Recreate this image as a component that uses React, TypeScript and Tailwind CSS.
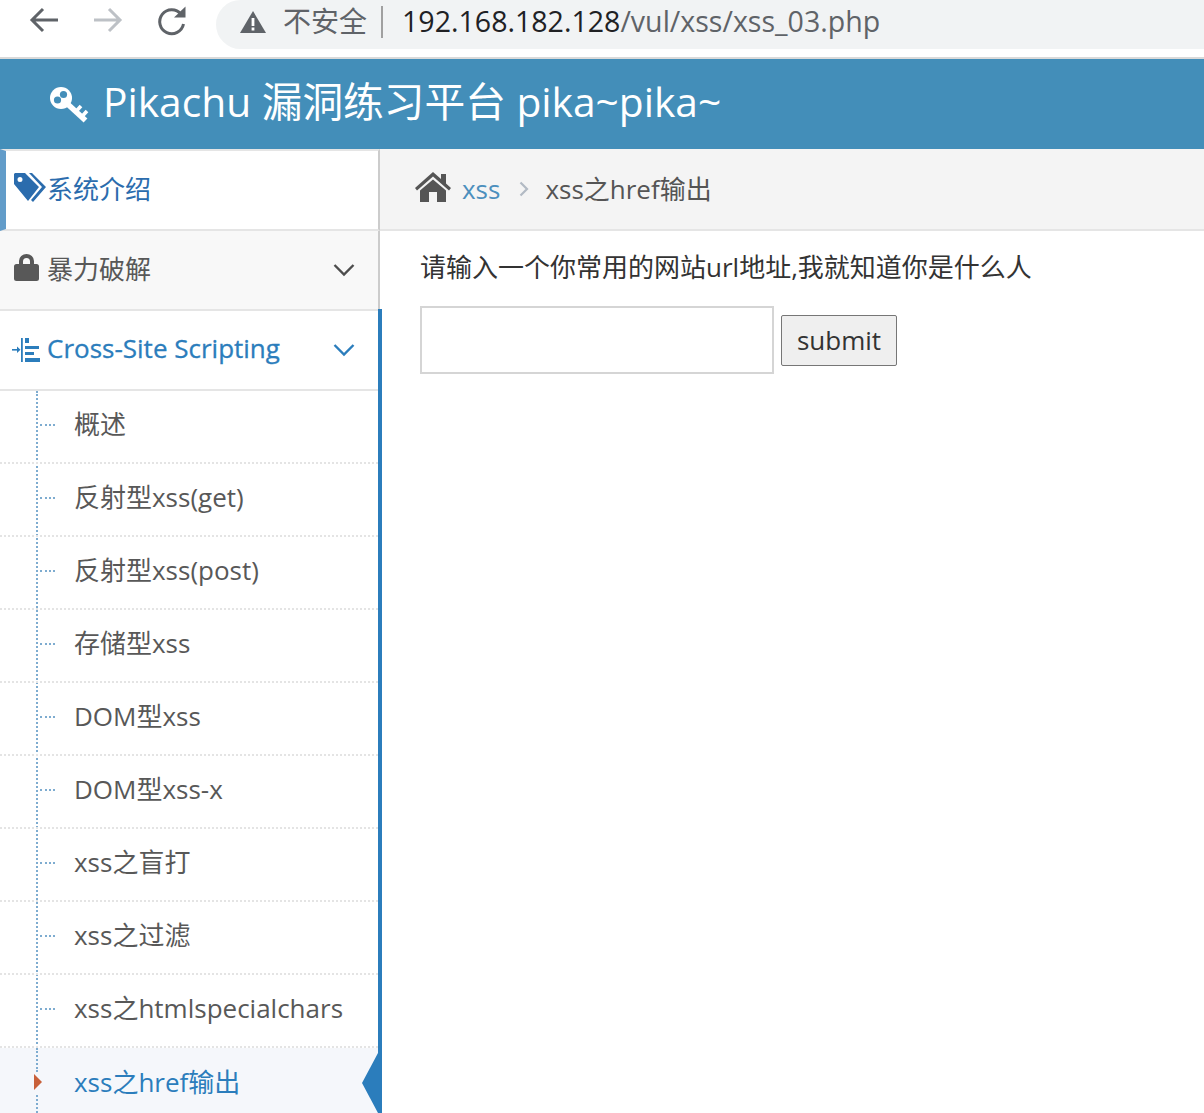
const font = "font-['Open_Sans','Noto_Sans_CJK_SC',sans-serif]";

const items = [
  "概述",
  "反射型xss(get)",
  "反射型xss(post)",
  "存储型xss",
  "DOM型xss",
  "DOM型xss-x",
  "xss之盲打",
  "xss之过滤",
  "xss之htmlspecialchars",
];

function Chevron({ color }: { color: string }) {
  return (
    <svg width="22" height="14" viewBox="0 0 22 14" className="ml-auto mr-[23px]" fill="none">
      <path d="M1.5 2 L11 11.5 L20.5 2" stroke={color} strokeWidth="2.4" />
    </svg>
  );
}

function ChromeBar() {
  return (
    <div className="flex h-[57px] items-start bg-white">
      <svg width="32" height="32" viewBox="0 0 32 32" className="ml-[28px] mt-[4px]" fill="none">
        <path d="M4 16 H30 M15 5 L4 16 L15 27" stroke="#5f6368" strokeWidth="3" />
      </svg>
      <svg width="32" height="32" viewBox="0 0 32 32" className="ml-[32px] mt-[4px]" fill="none">
        <path d="M2 16 H28 M17 5 L28 16 L17 27" stroke="#bdc1c6" strokeWidth="3" />
      </svg>
      <svg width="32" height="32" viewBox="0 0 32 32" className="ml-[32px] mt-[5px]" fill="none">
        <path d="M25 9 A12 12 0 1 0 27.5 19" stroke="#5f6368" strokeWidth="3" />
        <path d="M18 12.5 H29.5 V1.5 Z" fill="#5f6368" />
      </svg>
      <div className="ml-[28px] flex h-[49px] flex-1 items-center rounded-l-[25px] bg-[#f1f3f4] pl-[24px]">
        <svg width="26" height="24" viewBox="0 0 26 24" className="-translate-y-[3px]">
          <path d="M13 1 L26 23 H0 Z" fill="#5f6368" />
          <rect x="11.6" y="8" width="2.8" height="8" fill="#fff" />
          <rect x="11.6" y="17.5" width="2.8" height="3" fill="#fff" />
        </svg>
        <span className="ml-[17px] pb-[7px] text-[28px] leading-none text-[#5f6368]">不安全</span>
        <span className="ml-[14px] h-[32px] w-[2px] -translate-y-[3px] bg-[#a0a0a0]" />
        <span className="ml-[19px] pb-[7px] text-[28.55px] leading-none text-[#202124]">
          192.168.182.128<span className="text-[#5f6368]">/vul/xss/xss_03.php</span>
        </span>
      </div>
    </div>
  );
}

function Header() {
  return (
    <div className="flex h-[92px] items-center border-t-2 border-[#d9d9d9] bg-[#438eb9] pl-[50px] text-white">
      <svg width="40" height="37" viewBox="0 0 40 37" className="mt-[2px]" fill="none">
        <circle cx="11" cy="11" r="11" fill="#ffffff" />
        <circle cx="7.5" cy="13" r="3.6" fill="#438eb9" />
        <circle cx="13.5" cy="7.5" r="3.6" fill="#438eb9" />
        <path d="M17 16.5 L35.5 33.5" stroke="#ffffff" strokeWidth="5.5" />
        <path d="M25.5 25 L31 19 M31.5 30 L37 24" stroke="#ffffff" strokeWidth="3.6" />
      </svg>
      <span className="ml-[13px] pb-[6px] text-[40.7px] leading-none">Pikachu 漏洞练习平台 pika~pika~</span>
    </div>
  );
}

function Sidebar() {
  return (
    <div className="w-[380px] shrink-0 text-[26px] leading-none">
      <div className="flex h-[82px] items-center border-y-2 border-r-2 border-[#e5e5e5] border-r-[#cccccc] border-l-[6px] border-l-[#629cc9] bg-white pl-[8px] text-[#2b6cad]">
        <svg width="32" height="30" viewBox="0 0 32 30" fill="#2b6cad" className="-translate-y-[2px]">
          <path
            fillRule="evenodd"
            d="M1 0 H11 L25 14 L14 28 L0 11 V1 Z M6 4 A2.5 2.5 0 1 0 6 9 A2.5 2.5 0 1 0 6 4 Z"
          />
          <path d="M15 0 H18 L32 14 L19 29 L17 27 L28 14 Z" />
        </svg>
        <span className="ml-[1px] pb-[2px]">系统介绍</span>
      </div>
      <div className="flex h-[78px] items-center border-r-2 border-[#cccccc] bg-[#f8f8f8] pl-[14px] text-[#585858]">
        <svg width="25" height="27" viewBox="0 0 25 27" fill="#585858" className="-translate-y-[3px]">
          <path
            fillRule="evenodd"
            d="M5 10 V7 A7.5 7 0 0 1 20 7 V10 H22.5 A2.5 2.5 0 0 1 25 12.5 V24.5 A2.5 2.5 0 0 1 22.5 27 H2.5 A2.5 2.5 0 0 1 0 24.5 V12.5 A2.5 2.5 0 0 1 2.5 10 Z M9 10 H16 V7.5 A3.5 3.5 0 0 0 9 7.5 Z"
          />
        </svg>
        <span className="ml-[8px] pb-[2px]">暴力破解</span>
        <Chevron color="#4d4d4d" />
      </div>
      <div className="w-[382px] border-r-4 border-[#2b7dbc]">
        <div className="flex h-[82px] items-center border-y-2 border-[#e5e5e5] bg-white pl-[12px] text-[#2b7dbc]">
          <svg width="28" height="24" viewBox="0 0 28 24" fill="#2b7dbc">
            <rect x="0" y="11" width="6" height="1.6" />
            <path d="M5 8.5 L8.5 11.8 L5 15 Z" />
            <rect x="9" y="0" width="1.8" height="24" />
            <rect x="13" y="0" width="4" height="5" />
            <rect x="13" y="8" width="14" height="3" />
            <rect x="13" y="14" width="9" height="3" />
            <rect x="13" y="20" width="15" height="4" />
          </svg>
          <span className="ml-[7px] pb-[4px] [-webkit-text-stroke:0.3px_#2b7dbc]">Cross-Site Scripting</span>
          <Chevron color="#2b7dbc" />
        </div>
        <div className="relative">
          <div className="absolute left-[36px] top-0 h-[676px] border-l-2 border-dotted border-[#7eacd0]" />
          {items.map((t) => (
            <div
              key={t}
              className="relative flex h-[73px] items-center border-b-2 border-dotted border-[#e4e4e4] pb-[6px] pl-[74px] text-[#585858]"
            >
              <span className="absolute left-[40px] top-[33px] w-[15px] border-t-2 border-dotted border-[#7eacd0]" />
              {t}
            </div>
          ))}
          <div className="relative flex h-[73px] items-center bg-[#f5f7fb] pb-[6px] pl-[74px] text-[#2b7dbc]">
            <span className="absolute left-[36px] top-0 h-[24px] border-l-2 border-dotted border-[#7eacd0]" />
            <span className="absolute left-[34px] top-[26px] h-0 w-0 border-y-[8px] border-l-[8px] border-y-transparent border-l-[#c8603a]" />
            <span className="absolute left-[36px] top-[47px] h-[26px] border-l-2 border-dotted border-[#7eacd0]" />
            xss之href输出
            <span className="absolute right-0 top-[5px] h-0 w-0 border-y-[30px] border-r-[16px] border-y-transparent border-r-[#2b7dbc]" />
          </div>
        </div>
      </div>
    </div>
  );
}

function Main() {
  return (
    <div className="min-w-0 flex-1 text-[26px] leading-none">
      <div className="flex h-[82px] items-center border-b-2 border-[#e5e5e5] bg-[#f4f4f4] pl-[35px]">
        <svg width="36" height="30" viewBox="0 0 36 30" fill="#555555" className="-translate-y-[2px]">
          <path d="M18 0 L26 7 V2 H31 V11.5 L36 16 L34 18.5 L18 4.5 L2 18.5 L0 16 Z" />
          <path d="M18 7.5 L31 18.5 V30 H22 V20 H14 V30 H5 V18.5 Z" />
        </svg>
        <span className="ml-[11px] text-[#4c8fbd]">xss</span>
        <svg width="10" height="16" viewBox="0 0 10 16" className="ml-[19px]" fill="none">
          <path d="M1.5 1.5 L8 8 L1.5 14.5" stroke="#b2bac4" strokeWidth="2.2" />
        </svg>
        <span className="ml-[16px] text-[#555555]">xss之href输出</span>
      </div>
      <div className="px-[40px] pt-[23px]">
        <p className="h-[32px] whitespace-nowrap text-[#333333]">
          请输入一个你常用的网站url地址,我就知道你是什么人
        </p>
        <form className="mt-[20px] flex items-center">
          <input
            type="text"
            aria-label="url"
            className="h-[68px] w-[354px] border-2 border-[#d5d5d5] bg-white"
          />
          <button
            type="button"
            className="ml-[7px] mt-[1px] h-[51px] w-[116px] rounded-[2px] border border-[#767676] bg-[#efefef] pb-[2px] text-[26px] leading-none text-[#333333]"
          >
            submit
          </button>
        </form>
      </div>
    </div>
  );
}

export default function App() {
  return (
    <div className={`h-[1113px] w-[1204px] overflow-hidden bg-white ${font}`}>
      <ChromeBar />
      <Header />
      <div className="flex">
        <Sidebar />
        <Main />
      </div>
    </div>
  );
}
